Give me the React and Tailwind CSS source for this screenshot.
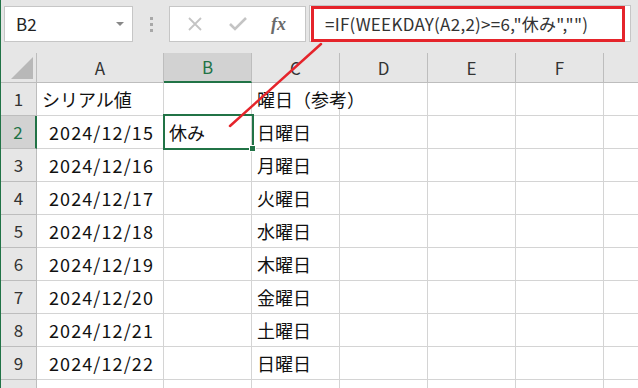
import React from "react";

const JP = { fontFamily: '"Noto Sans CJK JP", "Noto Sans", sans-serif' };

const cols = [
  { k: "A", w: "w-[127px]" },
  { k: "B", w: "w-[88px]" },
  { k: "C", w: "w-[88px]" },
  { k: "D", w: "w-[88px]" },
  { k: "E", w: "w-[88px]" },
  { k: "F", w: "w-[88px]" },
];

const rows = [
  ["シリアル値", "", "曜日（参考）"],
  ["2024/12/15", "休み", "日曜日"],
  ["2024/12/16", "", "月曜日"],
  ["2024/12/17", "", "火曜日"],
  ["2024/12/18", "", "水曜日"],
  ["2024/12/19", "", "木曜日"],
  ["2024/12/20", "", "金曜日"],
  ["2024/12/21", "", "土曜日"],
  ["2024/12/22", "", "日曜日"],
  ["", "", ""],
];

function Toolbar() {
  return (
    <div className="flex h-[53px] items-start bg-[#e6e6e6] pt-[6px]">
      <div className="ml-[3px] flex h-[36px] w-[129px] items-center justify-between border border-[#c6c6c6] bg-white pl-[11px] pr-[7px]">
        <span className="text-[17px] text-[#222]" style={JP}>B2</span>
        <svg width="10" height="6" viewBox="0 0 10 6"><path d="M1 1h8L5 5z" fill="#888" /></svg>
      </div>
      <div className="ml-[17px] mt-[11px] flex flex-col gap-[3px]">
        <div className="h-[3px] w-[3px] bg-[#a8a8a8]" />
        <div className="h-[3px] w-[3px] bg-[#a8a8a8]" />
        <div className="h-[3px] w-[3px] bg-[#a8a8a8]" />
      </div>
      <div className="ml-[16px] flex h-[36px] w-[137px] items-center border border-[#c6c6c6] bg-white">
        <svg className="ml-[17px]" width="16" height="16" viewBox="0 0 16 16">
          <path d="M2 2L14 14M14 2L2 14" stroke="#c4c4c4" strokeWidth="1.8" fill="none" />
        </svg>
        <svg className="ml-[25px]" width="20" height="16" viewBox="0 0 20 16">
          <path d="M2 8L7 13L18 2" stroke="#c4c4c4" strokeWidth="2.6" fill="none" />
        </svg>
        <span
          className="ml-[23px] text-[18px] italic font-bold text-[#6a6a6a] leading-none"
          style={{ fontFamily: '"Liberation Serif", serif' }}
        >
          fx
        </span>
      </div>
      <div className="ml-[3px] mt-[-1px] flex h-[37px] w-[322px] items-center border border-[#c6c6c6] bg-white pl-[1px]">
        <div className="flex h-[36px] w-[314px] items-center border-[3px] border-[#e5242b] pl-[11px]">
          <span className="text-[17px] text-[#333] tracking-[0.27px] whitespace-nowrap" style={JP}>
            =IF(WEEKDAY(A2,2)&gt;=6,"休み","")
          </span>
        </div>
      </div>
    </div>
  );
}

function HeaderRow() {
  return (
    <div className="flex h-[30px]">
      <div className="relative w-[36px] shrink-0 border-r border-b border-[#bdbdbd] bg-[#e6e6e6]">
        <svg className="absolute right-[3px] bottom-[3px]" width="22" height="22" viewBox="0 0 22 22">
          <path d="M22 0V22H0z" fill="#b8b8b8" />
        </svg>
      </div>
      {cols.map((c) => {
        const sel = c.k === "B";
        return (
          <div
            key={c.k}
            className={
              sel
                ? `${c.w} shrink-0 flex items-center justify-center border-r border-[#bdbdbd] border-b-2 border-b-[#217346] bg-[#d2d2d2] text-[#217346] text-[17px]`
                : `${c.w} shrink-0 flex items-center justify-center border-r border-b border-[#bdbdbd] bg-[#e6e6e6] text-[#333] text-[17px]`
            }
            style={JP}
          >
            {c.k}
          </div>
        );
      })}
      <div className="flex-1 border-b border-[#bdbdbd] bg-[#e6e6e6]" />
    </div>
  );
}

function DataRow({ i, data }) {
  const n = i + 1;
  const sel = n === 2;
  return (
    <div className="flex h-[33px]">
      <div
        className={
          sel
            ? "w-[36px] shrink-0 flex items-center justify-center border-b border-[#bdbdbd] border-r-2 border-r-[#217346] bg-[#d2d2d2] text-[#217346] text-[17px]"
            : "w-[36px] shrink-0 flex items-center justify-center border-b border-r border-[#bdbdbd] bg-[#e6e6e6] text-[#333] text-[17px]"
        }
        style={JP}
      >
        {n < 10 ? n : ""}
      </div>
      <div
        className={`w-[127px] shrink-0 flex items-center border-r border-b border-[#d4d4d4] text-[18px] text-[#111] ${
          n === 1 ? "justify-start pl-[5px]" : "justify-end pr-[9px] tracking-[1.1px]"
        }`}
        style={JP}
      >
        {data[0]}
      </div>
      <div className="w-[88px] shrink-0 flex items-center border-r border-b border-[#d4d4d4] pl-[5px] text-[18px] text-[#111]" style={JP}>
        {data[1]}
      </div>
      <div className="w-[88px] shrink-0 flex items-center border-r border-b border-[#d4d4d4] pl-[5px] text-[18px] text-[#111] whitespace-nowrap overflow-visible" style={JP}>
        {data[2]}
      </div>
      <div className="w-[88px] shrink-0 border-r border-b border-[#d4d4d4]" />
      <div className="w-[88px] shrink-0 border-r border-b border-[#d4d4d4]" />
      <div className="w-[88px] shrink-0 border-r border-b border-[#d4d4d4]" />
      <div className="flex-1 border-b border-[#d4d4d4]" />
    </div>
  );
}

export default function App() {
  return (
    <div className="relative h-[388px] w-[638px] overflow-hidden bg-white border-l border-[#217346]">
      <Toolbar />
      <HeaderRow />
      {rows.map((r, i) => (
        <DataRow key={i} i={i} data={r} />
      ))}
      {/* selection box around B2 */}
      <div className="pointer-events-none absolute left-[162px] top-[114px] h-[36px] w-[91px] border-2 border-[#217346]" />
      <div className="pointer-events-none absolute left-[248px] top-[145px] h-[7px] w-[7px] border border-white bg-[#217346]" />
      {/* annotation arrow line */}
      <svg className="pointer-events-none absolute left-0 top-0" width="638" height="388" viewBox="0 0 638 388">
        <line x1="229" y1="126" x2="320" y2="44" stroke="#e5242b" strokeWidth="2.5" strokeLinecap="round" />
      </svg>
    </div>
  );
}
